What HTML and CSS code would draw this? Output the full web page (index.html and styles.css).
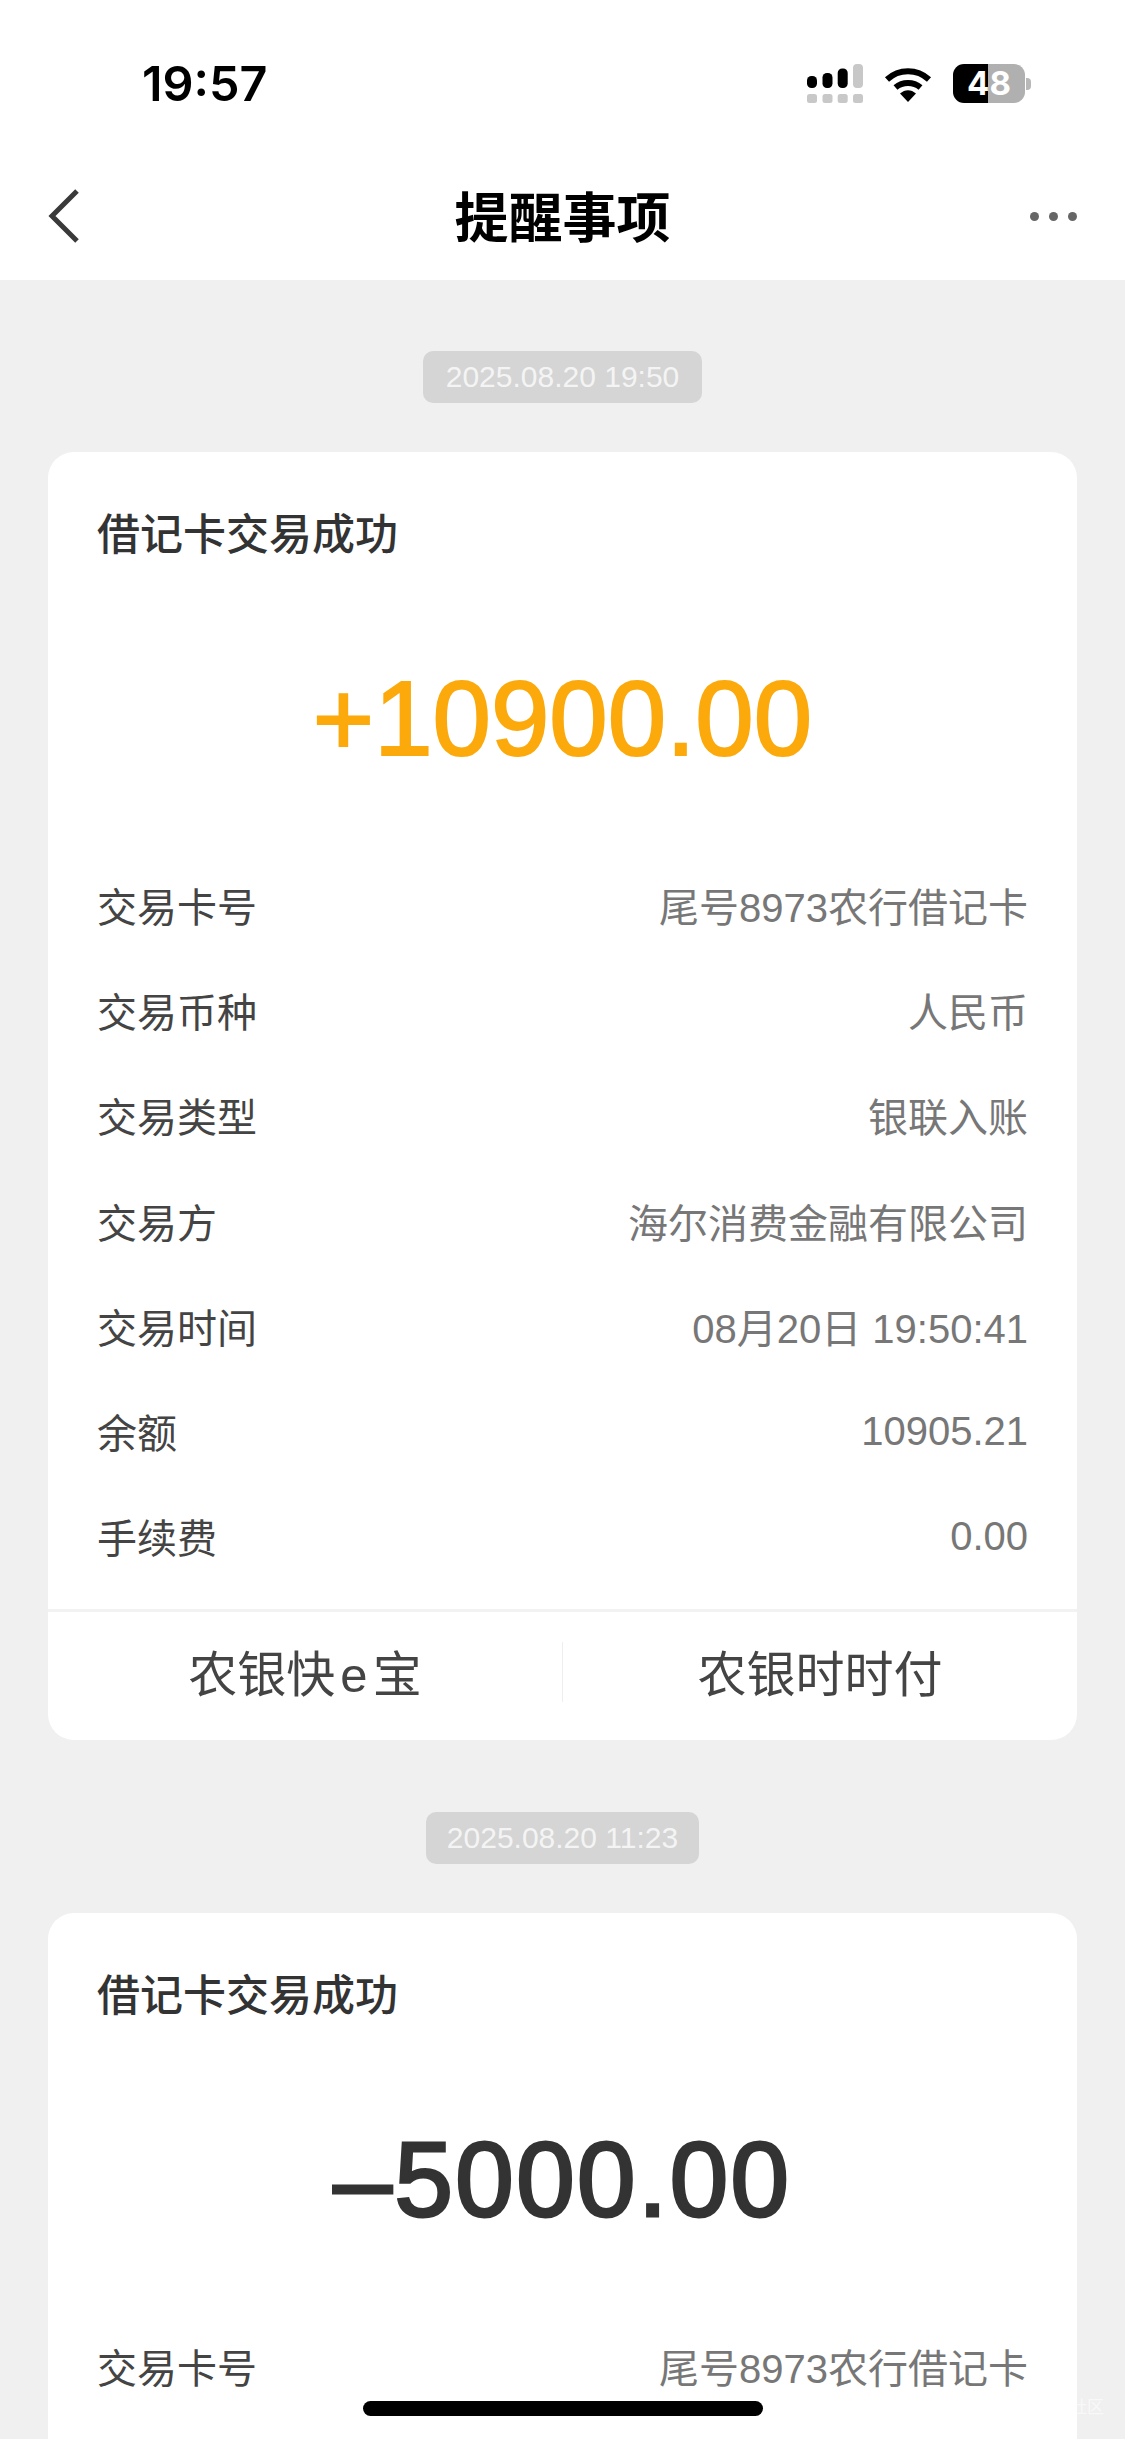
FILE: index.html
```html
<!DOCTYPE html>
<html lang="zh-Hans">
<head>
<meta charset="UTF-8" />
<meta name="viewport" content="width=device-width, initial-scale=1" />
<title>提醒事项</title>
<link rel="stylesheet" href="styles.css">
</head>
<body>

<div class="screen">
  <header class="topArea">
    <div class="statusBar">
      <span class="clock">19:57</span>
      <div class="statusIcons">
        <svg class="signal" width="56" height="39" viewBox="0 0 56 39">
          <rect x="0" y="12" width="10" height="12" rx="4.5" fill="#000"/>
          <rect x="15.500" y="9" width="10" height="15" rx="4.5" fill="#000"/>
          <rect x="30.700" y="4.500" width="10" height="19.500" rx="4.5" fill="#000"/>
          <rect x="46" y="0" width="10" height="24" rx="4" fill="#c8c8c8"/>
          <rect x="0" y="30" width="10" height="9" rx="2.500" fill="#c8c8c8"/>
          <rect x="15.500" y="30" width="10" height="9" rx="2.500" fill="#c8c8c8"/>
          <rect x="30.700" y="30" width="10" height="9" rx="2.500" fill="#c8c8c8"/>
          <rect x="46" y="30" width="10" height="9" rx="2.500" fill="#c8c8c8"/>
        </svg>
        <svg class="wifi" width="48" height="36" viewBox="0 0 48 36">
          <path d="M3 13.500C15 2.500 33 2.500 45 13.500" fill="none" stroke="#000" stroke-width="6"/>
          <path d="M11.500 21.500C18.500 15.500 29.500 15.500 36.500 21.500" fill="none" stroke="#000" stroke-width="6"/>
          <path d="M16 27.500C21 23 27 23 32 27.500L24 36Z" fill="#000"/>
        </svg>
        <div class="battery">
          <div class="batteryBody"><span>48</span></div>
          <div class="batteryCap"></div>
        </div>
      </div>
    </div>
    <nav class="navBar">
      <div class="navSide">
        <svg class="backIcon" width="32" height="54" viewBox="0 0 32 54">
          <path d="M29 2L4 27L29 52" fill="none" stroke="#3a3a3a" stroke-width="5"/>
        </svg>
      </div>
      <h1 class="navTitle">提醒事项</h1>
      <div class="navSide navSideRight">
        <div class="moreDots"><i></i><i></i><i></i></div>
      </div>
    </nav>
  </header>

  <main class="feed">
    <div class="timeTag">2025.08.20 19:50</div>
    <section class="card">
      <h2 class="cardTitle">借记卡交易成功</h2>
      <div class="amount amountIn">+10900.00</div>
      <div class="rows">
        <div class="row"><span class="rowLabel">交易卡号</span><span class="rowValue">尾号8973农行借记卡</span></div>
        <div class="row"><span class="rowLabel">交易币种</span><span class="rowValue">人民币</span></div>
        <div class="row"><span class="rowLabel">交易类型</span><span class="rowValue">银联入账</span></div>
        <div class="row"><span class="rowLabel">交易方</span><span class="rowValue">海尔消费金融有限公司</span></div>
        <div class="row"><span class="rowLabel">交易时间</span><span class="rowValue">08月20日 19:50:41</span></div>
        <div class="row"><span class="rowLabel">余额</span><span class="rowValue">10905.21</span></div>
        <div class="row"><span class="rowLabel">手续费</span><span class="rowValue">0.00</span></div>
      </div>
      <div class="cardActions">
        <div class="action">农银快<span class="actionLetter">e</span>宝</div>
        <div class="action">农银时时付</div>
      </div>
    </section>

    <div class="timeTag timeTagNarrow">2025.08.20 11:23</div>
    <section class="card cardCut">
      <h2 class="cardTitle">借记卡交易成功</h2>
      <div class="amount amountOut">–5000.00</div>
      <div class="rows">
        <div class="row"><span class="rowLabel">交易卡号</span><span class="rowValue">尾号8973农行借记卡</span></div>
      </div>
    </section>
  </main>

  <div class="homeBar"></div>
  <span class="watermark">社区</span>
</div>

</body>
</html>
```

FILE: styles.css
```css
* {
  box-sizing: border-box;
}
html, body {
  margin: 0;
  padding: 0;
}
body {
  background: #f0f0f0;
  font-family: "Liberation Sans", "Noto Sans CJK SC", sans-serif;
}
.screen {
  position: relative;
  width: 1125px;
  height: 2439px;
  overflow: hidden;
  background: #f0f0f0;
}

/* 顶部 */
.topArea {
  height: 280px;
  background: #fff;
}
.statusBar {
  height: 152px;
  padding: 59px 94px 0 142px;
  display: flex;
  justify-content: space-between;
  align-items: flex-start;
}
.clock {
  font-family: Inter, "Liberation Sans", sans-serif;
  font-size: 48.5px;
  line-height: 50px;
  font-weight: 600;
  color: #000;
}
.statusIcons {
  display: flex;
  align-items: center;
  gap: 21px;
  padding-top: 5px;
}
.battery {
  display: flex;
  align-items: center;
  gap: 1px;
}
.batteryBody {
  width: 72px;
  height: 39px;
  border-radius: 11px;
  background: linear-gradient(90deg, #000 48.6%, #b0b0b0 48.6%);
  color: #fff;
  font-family: Inter, "Liberation Sans", sans-serif;
  font-size: 33px;
  font-weight: 700;
  line-height: 39px;
  text-align: center;
}
.batteryCap {
  width: 5px;
  height: 12px;
  border-radius: 0 4px 4px 0;
  background: #b8b8b8;
}
.navBar {
  height: 128px;
  padding: 0 48px;
  display: flex;
  align-items: center;
  justify-content: space-between;
}
.navSide {
  width: 100px;
  display: flex;
}
.navSideRight {
  justify-content: flex-end;
}
.navTitle {
  margin: 0 0 4px;
  font-size: 54px;
  font-weight: 700;
  color: #000;
}
.moreDots {
  display: flex;
  gap: 10px;
}
.moreDots i {
  width: 9px;
  height: 9px;
  border-radius: 50%;
  background: #666;
}

/* 消息列表 */
.feed {
  padding-top: 71px;
  display: flex;
  flex-direction: column;
  align-items: center;
}
.timeTag {
  height: 52px;
  padding: 0 23px;
  border-radius: 10px;
  background: #d5d5d5;
  color: #f4f4f4;
  font-size: 30px;
  line-height: 52px;
  white-space: nowrap;
}
.timeTagNarrow {
  padding: 0 21px;
}
.card {
  flex-shrink: 0;
  width: 1029px;
  margin-top: 49px;
  margin-bottom: 72px;
  background: #fff;
  border-radius: 26px;
}
/* 第二张卡片超出屏幕底部 */
.cardCut {
  padding-bottom: 120px;
}
.cardTitle {
  margin: 0;
  padding: 54px 49px 0;
  font-size: 43px;
  line-height: 58px;
  font-weight: 500;
  color: #333;
}
.amount {
  margin-top: 95px;
  text-align: center;
  font-size: 105px;
  line-height: 120px;
  color: #333;
  -webkit-text-stroke: 2px #333;
}
.amountIn {
  color: #fca90c;
  -webkit-text-stroke-color: #fca90c;
}
.amountOut {
  letter-spacing: 2.5px;
  -webkit-text-stroke-width: 3px;
}
.rows {
  padding: 73.5px 49px 0;
}
.row {
  height: 105.2px;
  display: flex;
  justify-content: space-between;
  align-items: center;
  font-size: 40px;
}
.rowLabel {
  color: #444;
}
.rowValue {
  color: #777;
}
.cardActions {
  margin-top: 20.5px;
  height: 131px;
  border-top: 3px solid #f2f2f2;
  display: flex;
  padding-top: 30px;
}
.action {
  flex: 1;
  height: 60px;
  font-size: 49px;
  line-height: 66px;
  text-align: center;
  color: #444;
}
.action + .action {
  border-left: 1px solid #eee;
}
.actionLetter {
  margin: 0 5px;
}

.homeBar {
  position: absolute;
  left: 363px;
  bottom: 23px;
  width: 400px;
  height: 15px;
  border-radius: 8px;
  background: #000;
}
.watermark {
  position: absolute;
  right: 21px;
  top: 2398px;
  font-size: 17px;
  line-height: 20px;
  color: rgba(255, 255, 255, 0.6);
}
```
